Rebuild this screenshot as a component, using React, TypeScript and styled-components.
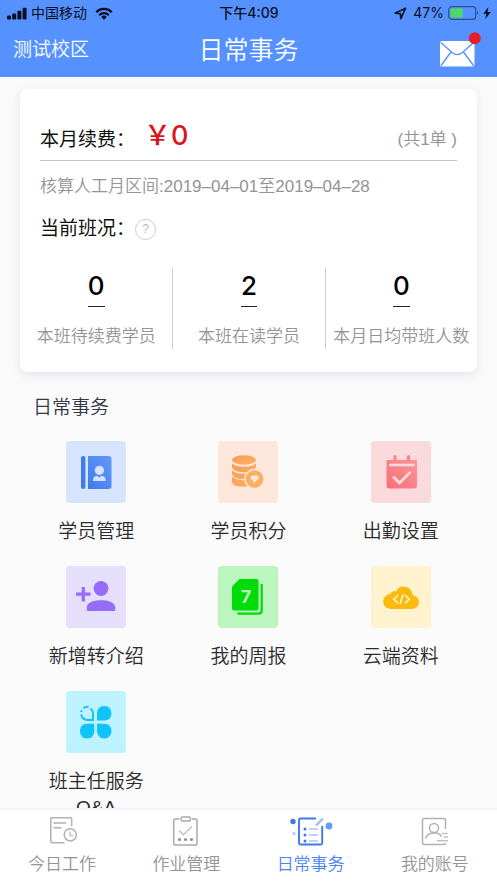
import React from "react";
import styled, { createGlobalStyle } from "styled-components";

const GlobalStyle = createGlobalStyle`
  *, *::before, *::after { box-sizing: border-box; }
  body {
    margin: 0;
    background: #fafafa;
    font-family: "Liberation Sans", "Noto Sans CJK SC", sans-serif;
    font-weight: 350;
  }
  button { border: 0; padding: 0; background: none; font: inherit; color: inherit; cursor: pointer; }
  a { color: inherit; text-decoration: none; }
  h1, h2, p, dl, dd { margin: 0; font-weight: inherit; }
`;

const Screen = styled.div`
  display: flex;
  flex-direction: column;
  height: 100vh;
`;

const Header = styled.header`
  flex: none;
  background: #5692ff;
  color: #fff;
`;

const StatusBar = styled.div`
  display: grid;
  grid-template-columns: 1fr auto 1fr;
  align-items: center;
  height: 26px;
  padding: 0 6px 0 7px;
  color: #0b1020;
  font-family: Inter, "Noto Sans CJK SC", sans-serif;
  font-size: 14px;
  font-weight: 400;
  line-height: 20px;
`;

const StatusGroup = styled.div<{ $end?: boolean }>`
  display: flex;
  align-items: center;
  justify-content: ${(p) => (p.$end ? "flex-end" : "flex-start")};
  gap: 4px;
  white-space: nowrap;
`;

const Carrier = styled.span`
  margin-right: 4px;
`;

const Percent = styled.span`
  margin-left: 2px;
`;

const Clock = styled.time`
  font-weight: 500;
  color: #0b1020;
`;

const TitleBar = styled.div`
  display: grid;
  grid-template-columns: 1fr auto 1fr;
  align-items: center;
  height: 51px;
  padding: 0 13px 4px;
`;

const Campus = styled.button`
  justify-self: start;
  font-size: 19px;
  line-height: 28px;
`;

const PageTitle = styled.h1`
  font-size: 25px;
  line-height: 36px;
`;

const MailButton = styled.button`
  justify-self: end;
  display: flex;
`;

const Main = styled.main`
  flex: 1;
  min-height: 0;
  overflow: hidden;
  padding: 12px 20px 0;
`;

const Card = styled.section`
  background: #fff;
  border-radius: 8px;
  box-shadow: 0 3px 10px rgba(70, 90, 150, 0.13);
  padding: 24px 0 23px;
`;

const FeeRow = styled.div`
  display: flex;
  align-items: flex-end;
  margin: 0 20px;
  height: 48px;
  padding-bottom: 6px;
  border-bottom: 1px solid #c4c4c4;
`;

const CardLabel = styled.h2`
  font-size: 19px;
  font-weight: 400;
  line-height: 28px;
  color: #111;
`;

const Amount = styled.strong`
  flex: 1;
  margin-left: 9px;
  font-family: Inter, "Noto Sans CJK SC", sans-serif;
  font-size: 27px;
  line-height: 36px;
  font-weight: 500;
  color: #d9161c;
`;

const Orders = styled.span`
  font-size: 17px;
  line-height: 28px;
  color: #949494;
`;

const Period = styled.p`
  margin: 13px 20px 0;
  font-size: 17px;
  line-height: 26px;
  color: #949494;
`;

const ClassRow = styled.div`
  display: flex;
  align-items: center;
  margin: 15px 20px 0;
`;

const HelpButton = styled.button`
  display: flex;
  align-items: center;
  justify-content: center;
  width: 21px;
  height: 21px;
  border: 1px solid #ccc;
  border-radius: 50%;
  font-size: 12px;
  line-height: 16px;
  color: #bbb;
`;

const Stats = styled.dl`
  display: grid;
  grid-template-columns: repeat(3, 1fr);
  margin-top: 25px;
`;

const Stat = styled.div`
  display: flex;
  flex-direction: column-reverse;
  align-items: center;
  justify-content: space-between;
  height: 81px;
  white-space: nowrap;

  & + & { border-left: 1px solid #ccc; }
`;

const StatLabel = styled.dt`
  font-size: 17px;
  line-height: 24px;
  color: #949494;
`;

const StatValue = styled.dd`
  padding-bottom: 2px;
  border-bottom: 1px solid #222;
  font-family: Inter, sans-serif;
  font-size: 26px;
  line-height: 36px;
  font-weight: 500;
  color: #000;
`;

const SectionTitle = styled.h2`
  margin: 22px 13px 19px;
  font-size: 19px;
  line-height: 28px;
  color: #33384d;
`;

const Features = styled.nav`
  display: grid;
  grid-template-columns: repeat(3, 1fr);
  grid-auto-rows: minmax(125px, auto);
`;

const Feature = styled.a`
  display: flex;
  flex-direction: column;
  align-items: center;
  gap: 16px;
`;

const Tile = styled.span<{ $tint: string }>`
  display: flex;
  align-items: center;
  justify-content: center;
  width: 60px;
  height: 62px;
  border-radius: 4px;
  background: ${(p) => p.$tint};
`;

const FeatureLabel = styled.span`
  max-width: 120px;
  font-size: 19px;
  line-height: 26px;
  text-align: center;
  color: #2b2b2b;
`;

const TabBar = styled.nav`
  flex: none;
  display: grid;
  grid-template-columns: repeat(4, 1fr);
  height: 75px;
  border-top: 2px solid #f3f4f8;
  background: #fff;
`;

const Tab = styled.a<{ $active?: boolean }>`
  display: flex;
  flex-direction: column;
  align-items: center;
  gap: 6px;
  padding-top: 5px;
  font-size: 17px;
  line-height: 24px;
  color: ${(p) => (p.$active ? "#4a84f5" : "#949494")};
`;

const SignalIcon = () => (
  <svg width="20" height="13" viewBox="0 0 20 13" fill="currentColor" aria-hidden="true">
    <rect x="0" y="8.5" width="4" height="4" rx="1.2" />
    <rect x="5.2" y="6.5" width="4" height="6" rx="1.2" />
    <rect x="10.4" y="3.8" width="4" height="8.7" rx="1.2" />
    <rect x="15.6" y="0.8" width="4" height="11.7" rx="1.2" />
  </svg>
);

const WifiIcon = () => (
  <svg width="18" height="13" viewBox="0 0 18 13" fill="none" stroke="currentColor" strokeWidth="2.3" aria-hidden="true">
    <path d="M1.2 5.1a11.2 11.2 0 0 1 15.6 0" />
    <path d="M4.2 8.1a7 7 0 0 1 9.6 0" />
    <path d="M9 12.7 6.2 9.9a4 4 0 0 1 5.6 0Z" fill="currentColor" stroke="none" />
  </svg>
);

const LocationIcon = () => (
  <svg width="13" height="13" viewBox="0 0 13 13" fill="none" stroke="currentColor" strokeWidth="1.6" strokeLinejoin="round" aria-hidden="true">
    <path d="M11.6 1.2 1.2 6.1l5.1.5.5 5.1Z" />
  </svg>
);

const BatteryIcon = () => (
  <svg width="31" height="14" viewBox="0 0 31 14" aria-hidden="true">
    <rect x="0.7" y="0.7" width="27" height="12.6" rx="3" fill="none" stroke="#2f5089" strokeWidth="1.2" />
    <rect x="2.6" y="2.6" width="12" height="8.8" rx="1" fill="#4cd964" />
    <path d="M29 5v4c1.3-.5 1.3-3.5 0-4Z" fill="#2f5089" />
  </svg>
);

const BoltIcon = () => (
  <svg width="8" height="12" viewBox="0 0 8 12" fill="currentColor" aria-hidden="true">
    <path d="M5.4 0 .3 6.7h2.9L2.4 12 7.7 5H4.6Z" />
  </svg>
);

const MailIcon = () => (
  <svg width="44" height="35" viewBox="0 0 44 35" aria-hidden="true">
    <rect x="0" y="9" width="34.5" height="25.5" rx="2" fill="#fff" />
    <path d="M.8 10.5 12 20.500q5.200 4.200 10.400 0L33.800 10.500M1 33.500 11 20M33.500 33.500 23.500 20" fill="none" stroke="#5692ff" strokeWidth="1.400" />
    <circle cx="34.8" cy="6.2" r="6" fill="#e61e28" />
  </svg>
);

const StudentIcon = () => (
  <svg width="60" height="62" viewBox="0 0 60 62" aria-hidden="true">
    <defs>
      <linearGradient id="student" x1="1" y1="0" x2="0" y2="1">
        <stop offset="0" stopColor="#6399f8" />
        <stop offset="1" stopColor="#3f7bef" />
      </linearGradient>
    </defs>
    <rect x="15" y="15" width="4.4" height="33" rx="2" fill="#3f7def" />
    <path d="M22 15h20.500q3 0 3 3v27q0 3-3 3H22Z" fill="url(#student)" />
    <circle cx="33.400" cy="29.300" r="4.600" fill="#d4e2fc" />
    <path d="M27 40q0-5.500 4.700-5l1.700 1.800L35 35q4.800-.5 4.800 5Z" fill="#d4e2fc" />
  </svg>
);

const CoinsIcon = () => (
  <svg width="60" height="62" viewBox="0 0 60 62" aria-hidden="true">
    <defs>
      <linearGradient id="coins" x1="0" y1="0" x2="1" y2="1">
        <stop offset="0" stopColor="#f99a58" />
        <stop offset="1" stopColor="#fbb266" />
      </linearGradient>
    </defs>
    <ellipse cx="26" cy="19" rx="12" ry="4.700" fill="url(#coins)" />
    <path d="M14 20.500q0 4.800 12 5 12-.2 12-5V41q0 4.700-12 4.700T14 41Z" fill="url(#coins)" />
    <path d="M14 27q1 5 12 5t12-5M14 33.500q1 5.200 12 5.200T38 33.500M14 20.200q1 4.700 12 4.700t12-4.700" fill="none" stroke="#fde7da" strokeWidth="1.300" />
    <circle cx="36.500" cy="38" r="9.600" fill="#fbaf63" stroke="#fde7da" strokeWidth="1.500" />
    <path d="M34 34.500h5.500l1.700 2.500-4.500 4.800-4.500-4.800Z" fill="#fde7da" />
  </svg>
);

const AttendanceIcon = () => (
  <svg width="60" height="62" viewBox="0 0 60 62" aria-hidden="true">
    <defs>
      <linearGradient id="attendance" x1="1" y1="0" x2="0" y2="1">
        <stop offset="0" stopColor="#fb9698" />
        <stop offset="1" stopColor="#f96d78" />
      </linearGradient>
    </defs>
    <path d="M15.500 19H46v25.500q0 3-3 3H18.500q-3 0-3-3Z" fill="url(#attendance)" />
    <path d="M24 15.500V20M37.500 15.500V20" stroke="#fa858c" strokeWidth="3.200" strokeLinecap="round" />
    <path d="M18 24h25.500" stroke="#fbdadd" strokeWidth="2.600" />
    <path d="m22 35.500 6.500 6.500 11-11" fill="none" stroke="#fbdadd" strokeWidth="2.800" />
  </svg>
);

const ReferralIcon = () => (
  <svg width="60" height="62" viewBox="0 0 60 62" fill="#966cf8" aria-hidden="true">
    <circle cx="35" cy="22.500" r="7.400" />
    <path d="M20.800 45v-3.500C20.800 36 29 34.300 35 34.300S49.200 36 49.200 41.500V45Z" />
    <path d="M17.300 21v14.500M10 28.200h14.500" stroke="#966cf8" strokeWidth="3.200" />
  </svg>
);

const ReportText = styled.text`
  font-family: Inter, sans-serif;
  font-size: 18px;
  font-weight: 700;
  fill: #baf6bd;
`;

const ReportIcon = () => (
  <svg width="60" height="62" viewBox="0 0 60 62" aria-hidden="true">
    <path d="M21.500 13h17q2 0 2 2v27.500q0 2-2 2H16q-2 0-2-2V20.500Z" fill="#00dc08" />
    <path d="M43.700 18v26.500q0 3.200-3.200 3.200H19.500" fill="none" stroke="#00dc08" strokeWidth="2.200" />
    <ReportText x="28" y="37" textAnchor="middle">7</ReportText>
  </svg>
);

const CloudIcon = () => (
  <svg width="60" height="62" viewBox="0 0 60 62" aria-hidden="true">
    <path d="M20 43q-7.500-.5-7.800-7.500.4-6.500 7-7.500 2.300-4.500 5.800-2.500 2-5 7.500-5 7.500.2 9.500 9 6 1.200 6 6.800-.5 6.200-7 6.700Z" fill="#fcbb0c" />
    <path d="m27 29-4.200 4.200L27 37.400M34 29l4.200 4.200L34 37.400M32 28.500l-3 9.500" fill="none" stroke="#fff2cf" strokeWidth="1.600" />
  </svg>
);

const CloverIcon = () => (
  <svg width="60" height="62" viewBox="0 0 60 62" fill="#0fc3fb" aria-hidden="true">
    <path d="M31 29.500V22q.5-7 7.200-7 7 .3 7.200 7.300-.2 7-7 7.200Z" />
    <path d="M14 40q.2-7 7-7.200h7.300V40q-.3 7.300-7.300 7.500-6.800-.2-7-7.500Z" />
    <path d="M31 32.800h7.300q7 .3 7.200 7.200-.4 7.200-7.200 7.500-7-.3-7.300-7.500Z" />
    <path d="M15.200 23.500q.8 5.200 6.300 5.400H27V22q-.3-3-2.500-4.500" fill="none" stroke="#0fc3fb" strokeWidth="2" />
    <path d="M17.500 17.200q2-1.700 5-1.400" fill="none" stroke="#0fc3fb" strokeWidth="2" />
    <circle cx="15.300" cy="20.200" r="1.100" />
  </svg>
);

const TodayIcon = () => (
  <svg width="44" height="32" viewBox="0 0 44 32" fill="none" stroke="#b1b1b6" strokeWidth="1.500" aria-hidden="true">
    <path d="M24.500 27.800H12q-1.200 0-1.200-1.200V4q0-1.200 1.200-1.200h18.500q1.200 0 1.200 1.200v7" />
    <path d="M13.500 8h12.500M13.500 12.800h8" />
    <circle cx="30.300" cy="19.800" r="6.100" />
    <path d="M30 16.500v4h3.500" stroke="#c8c8cc" />
  </svg>
);

const HomeworkIcon = () => (
  <svg width="44" height="32" viewBox="0 0 44 32" fill="none" stroke="#aaaab0" strokeWidth="1.500" aria-hidden="true">
    <path d="M15.500 4H11.500q-1.800 0-1.800 1.800v22.400q0 1.800 1.800 1.800h19.700q1.800 0 1.800-1.800V5.800Q33 4 31.200 4H28" />
    <rect x="17" y="2" width="9.500" height="4" rx="1.500" />
    <path d="m15 15.500 4.500 4.200L28 11.500" stroke="#c3c3c7" />
    <g fill="#88888e" stroke="none">
      <circle cx="15.500" cy="24.500" r="1.500" />
      <circle cx="21.500" cy="24.500" r="1.500" />
      <circle cx="27.500" cy="24.500" r="1.500" />
    </g>
  </svg>
);

const DailyIcon = () => (
  <svg width="44" height="32" viewBox="0 0 44 32" fill="none" stroke="#3f78e7" aria-hidden="true">
    <path d="M27 3.500H11.500q-1.500 0-1.500 1.500v23q0 1.500 1.500 1.500h20.200q1.500 0 1.500-1.500V11" strokeWidth="1.900" />
    <path d="m27 10.500 7-7" stroke="#9dbcf8" strokeWidth="2.400" />
    <path d="M20 14h9M20 20h9M20 26h9" stroke="#aac4f7" strokeWidth="1.600" />
    <g fill="#3f78e7" stroke="none">
      <circle cx="16" cy="14" r="1.500" />
      <circle cx="16" cy="20" r="1.500" />
      <circle cx="16" cy="26" r="1.500" />
      <circle cx="4" cy="6.500" r="2.700" />
      <circle cx="5" cy="18.500" r="1.500" fill="#a9c5fa" />
      <circle cx="40" cy="11" r="3.400" fill="#639af5" />
    </g>
  </svg>
);

const AccountIcon = () => (
  <svg width="44" height="32" viewBox="0 0 44 32" fill="none" stroke="#b1b1b6" strokeWidth="1.500" aria-hidden="true">
    <path d="M32.500 14V5q0-1.500-1.500-1.500H11Q9.500 3.500 9.500 5v23q0 1.500 1.500 1.500h20q1.500 0 1.500-1.500" />
    <circle cx="21" cy="13" r="4.600" />
    <path d="M12.500 23.500q2-5.500 8.500-5.800 5.500.2 7.500 4" />
    <path d="M28.500 18.500h6M31 22h4M24 25.800h11" stroke="#c1c1c5" />
  </svg>
);

const stats = [
  { label: "本班待续费学员", value: 0 },
  { label: "本班在读学员", value: 2 },
  { label: "本月日均带班人数", value: 0 },
];

const features = [
  { label: "学员管理", tint: "#d7e4fd", Icon: StudentIcon },
  { label: "学员积分", tint: "#fde7da", Icon: CoinsIcon },
  { label: "出勤设置", tint: "#fbdadd", Icon: AttendanceIcon },
  { label: "新增转介绍", tint: "#e5dffc", Icon: ReferralIcon },
  { label: "我的周报", tint: "#baf6bd", Icon: ReportIcon },
  { label: "云端资料", tint: "#fff2cf", Icon: CloudIcon },
  { label: "班主任服务 Q&A", tint: "#bff2ff", Icon: CloverIcon },
];

const tabs = [
  { label: "今日工作", Icon: TodayIcon },
  { label: "作业管理", Icon: HomeworkIcon },
  { label: "日常事务", Icon: DailyIcon, active: true },
  { label: "我的账号", Icon: AccountIcon },
];

export default function App() {
  return (
    <Screen lang="zh-CN">
      <GlobalStyle />
      <Header>
        <StatusBar>
          <StatusGroup>
            <SignalIcon />
            <Carrier>中国移动</Carrier>
            <WifiIcon />
          </StatusGroup>
          <Clock>下午4:09</Clock>
          <StatusGroup $end>
            <LocationIcon />
            <Percent>47%</Percent>
            <BatteryIcon />
            <BoltIcon />
          </StatusGroup>
        </StatusBar>
        <TitleBar>
          <Campus type="button">测试校区</Campus>
          <PageTitle>日常事务</PageTitle>
          <MailButton type="button" aria-label="消息">
            <MailIcon />
          </MailButton>
        </TitleBar>
      </Header>

      <Main>
        <Card>
          <FeeRow>
            <CardLabel>本月续费：</CardLabel>
            <Amount>￥0</Amount>
            <Orders>(共1单 )</Orders>
          </FeeRow>
          <Period>核算人工月区间:2019–04–01至2019–04–28</Period>
          <ClassRow>
            <CardLabel>当前班况：</CardLabel>
            <HelpButton type="button" aria-label="班况说明">?</HelpButton>
          </ClassRow>
          <Stats>
            {stats.map((s) => (
              <Stat key={s.label}>
                <StatLabel>{s.label}</StatLabel>
                <StatValue>{s.value}</StatValue>
              </Stat>
            ))}
          </Stats>
        </Card>

        <SectionTitle>日常事务</SectionTitle>
        <Features aria-label="日常事务">
          {features.map(({ label, tint, Icon }) => (
            <Feature key={label} href="#">
              <Tile $tint={tint}>
                <Icon />
              </Tile>
              <FeatureLabel>{label}</FeatureLabel>
            </Feature>
          ))}
        </Features>
      </Main>

      <TabBar aria-label="主导航">
        {tabs.map(({ label, Icon, active }) => (
          <Tab key={label} href="#" $active={active} aria-current={active ? "page" : undefined}>
            <Icon />
            {label}
          </Tab>
        ))}
      </TabBar>
    </Screen>
  );
}
